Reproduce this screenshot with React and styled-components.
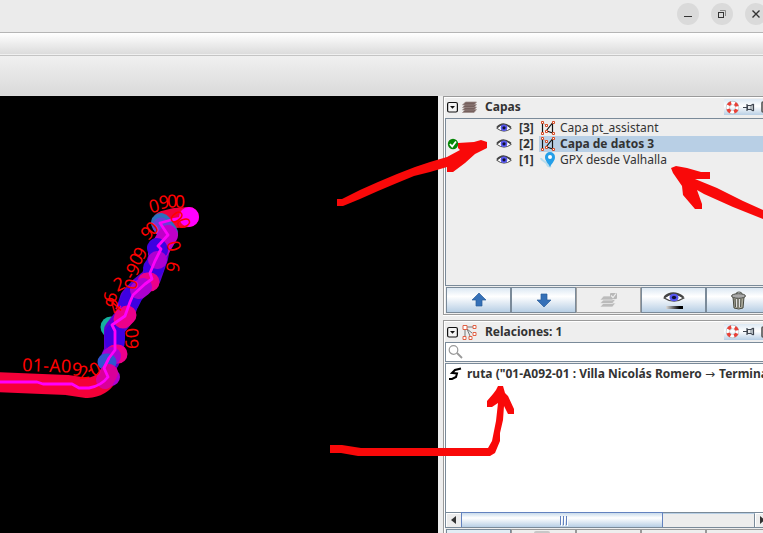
import React from 'react';
import styled, { createGlobalStyle } from 'styled-components';

const GlobalStyle = createGlobalStyle`
  * { box-sizing: border-box; }
  body { margin: 0; overflow: hidden; background: #eee; }
  svg { display: block; flex: none; }
`;
const Window = styled.div`
  position: relative; width: 763px; height: 533px; overflow: hidden;
  display: flex; flex-direction: column; background: #eee; color: #333;
  font: 12px/16px "Noto Sans", sans-serif;
`;
const TitleBar = styled.header`
  height: 33px; flex: none; display: flex; gap: 12px; padding: 3px 0 0 677px;
  background: #ebebeb; border-bottom: 1px solid #b5b5b5;
`;
const WindowButton = styled.button`
  width: 22px; height: 22px; flex: none; padding: 0; border: 0; border-radius: 50%;
  background: #dadada;
`;
const MenuBar = styled.div`
  height: 23px; flex: none; background: linear-gradient(#fff, #dadada);
  border-bottom: 1px solid #c4c4c4; box-shadow: inset 0 -1px #f0f0f0;
`;
const ToolBar = styled.div`
  height: 40px; flex: none; background: linear-gradient(#f0f0f0, #dadada);
  border-bottom: 1px solid #ddd;
`;
const Workspace = styled.main`display: flex; height: 437px; flex: none;`;
const MapView = styled.section`width: 438px; height: 437px; flex: none; background: #000;`;
const SideBar = styled.aside`
  width: 325px; height: 437px; flex: none; padding-left: 5px; background: #eee; overflow: hidden;
`;
const Panel = styled.section`
  height: ${p => p.$height}px; width: 330px;
  border: solid #9a9a9a; border-width: 1px 0 0 1px;
  box-shadow: inset 1px 1px #fff; padding-left: 1px;
`;
const Divider = styled.div`height: 6px; border-top: 1px solid #999; background: #eee; box-shadow: inset 0 1px #fff;`;
const PanelHeader = styled.div`
  height: 21px; display: flex; align-items: center; padding: 0 0 ${p => p.$raise ? 1 : 0}px 2px;
`;
const PanelTitle = styled.h2`margin: 0; width: ${p => p.$width}px; padding-left: ${p => p.$indent}px; font: bold 12px/16px "Noto Sans", sans-serif;`;
const HeaderTools = styled.div`
  display: flex; align-items: center; width: 48px; height: 16px; gap: 3px; padding-left: 1px;
  background: linear-gradient(#dce8f3, #fff 45%, #b8cfe5);
`;
const List = styled.div`
  height: ${p => p.$height}px; background: ${p => p.$bg};
  border: solid #7a8a99; border-width: 1px 0 1px 1px; padding-top: 1px;
`;
const LayerRow = styled.div`height: 16px; display: flex; align-items: center;`;
const Status = styled.span`width: 50px; padding-left: 1px; flex: none;`;
const LayerIndex = styled.b`width: 28px; padding-left: 7px; flex: none;`;
const LayerName = styled.div`
  display: flex; align-items: center; flex: 1; height: 16px; margin-left: -1px; padding-left: 1px; gap: 4px;
  white-space: nowrap; font-weight: ${p => p.$active ? 700 : 400};
  background: ${p => p.$active ? '#b8cfe5' : 'transparent'};
`;
const Buttons = styled.div`display: flex; height: 28px; padding: 1px 0 0 1px;`;
const ActionButton = styled.button`
  width: 65px; height: 26px; flex: none; padding: 0; display: flex; align-items: center; justify-content: center;
  border: 1px solid ${p => p.$off ? '#a0a0a0' : '#7a8a99'};
  background: ${p => p.$off ? '#eee' : 'linear-gradient(#dce8f3, #fff 35%, #b8cfe5)'};
`;
const SearchField = styled.div`
  height: 20px; border: 1px solid #7a8a99; border-right: 0; background: #fff; padding: 1px 2px;
  margin-bottom: 1px;
`;
const RelationList = styled.div`
  height: 165px; background: #fff; border: solid #7a8a99; border-width: 1px 0 0 1px;
  display: flex; flex-direction: column; justify-content: space-between; padding-top: 1px;
`;
const RelationRow = styled.div`height: 17px; display: flex; align-items: center; gap: 5px; padding-left: 2px; font-weight: bold; white-space: pre;`;
const Towards = styled.span`
  display: inline-block; width: 11px; height: 12px; font: 12px/12px "DejaVu Sans", sans-serif;
`;
const ScrollBar = styled.div`height: 16px; display: flex; border: solid #7a8a99; border-width: 1px 0; background: #ededed;`;
const ScrollArrow = styled.div`width: 15px; flex: none; display: flex; align-items: center; justify-content: center; box-shadow: inset 1px 1px #fff;`;
const Thumb = styled.div`
  width: 202px; flex: none; border: solid #6382bf; border-width: 1px 1px 0;
  margin-top: -1px; display: flex; gap: 1px; padding: 3px 0 2px 98px;
  background: linear-gradient(#c8daeb, #fff 35%, #b8cfe5);
`;
const Grip = styled.i`width: 1px; margin-right: 1px; height: 9px; background: #6382bf; box-shadow: 1px 1px #fff;`;
const Track = styled.div`width: 92px; flex: none; border-top: 1px solid #b8cfe5; border-right: 1px solid #7a8a99;`;
const LowerButtons = styled.div`display: flex; height: 5px; padding: 1px 0 0 1px; overflow: hidden;`;
const LowerButton = styled.div`
  width: 65px; height: 8px; flex: none; border: 1px solid ${p => p.$off ? '#999' : '#7a8a99'};
  background: ${p => p.$off ? '#eee' : '#e2edf5'}; padding-left: 22px;
  &::after { content: ''; display: ${p => p.$mark ? 'block' : 'none'}; width: 16px; height: 5px; margin-top: 1px; border-radius: 2px; background: #c7c7c7; }
`;
const Annotation = styled.svg`position: absolute; inset: 0; pointer-events: none;`;

const Eye = ({ large }) => (
  <svg width={large ? 22 : 16} height={large ? 20 : 12} viewBox={large ? '0 0 22 20' : '0 0 16 12'}>
    <g transform={large ? 'translate(.2 1) scale(1.35 1.12)' : ''}>
      <path d="M.7 6.2Q8-1 15.3 6.3 8 12 .7 6.2Z" fill="#fff" stroke="#4a4a4a" />
      <path d="M1 5.5Q7-1.3 14.8 5.5" fill="none" stroke="#444" strokeWidth="1.8" />
      <circle cx="8" cy="5.8" r="3.3" fill="#5656ef" /><circle cx="8" cy="5.8" r="1.6" fill="#111130" />
    </g>
    {large && <><defs><linearGradient id="fade"><stop stopColor="#ddd" /><stop offset=".8" /></linearGradient></defs><path fill="url(#fade)" d="M3 16h17v3H3z" /></>}
  </svg>
);
const Nodes = () => <svg width="16" height="16" viewBox="0 0 16 16"><path d="M2.5 3v9M6.5 10.5 12.5 3v9.5M7 11l5.5 2" stroke="#151515" fill="none" strokeWidth="1.2" /><path d="M3 3l3.5 2.5" stroke="#aaa" /><g fill="#fff" stroke="#d74b25"><path d="M1.5 1.5h2v2h-2zM5.5 4.5h2v2h-2zM12.5 1.5h2v2h-2zM1.5 12.5h2v2h-2zM5.5 10.5h2v2h-2zM12.5 12.5h2v2h-2z" /></g></svg>;
const Pin = () => <svg width="16" height="16" viewBox="0 0 16 16"><path d="M1 6c0 3 5 3 6 6 .5 2 2 3 4 2" fill="none" stroke="#b7dced" strokeWidth="2" /><path d="M10 15C8 11 5 9 5 5a5 5 0 0 1 10 0c0 4-3 6-5 10Z" fill="#259fe8" /><circle cx="10" cy="5" r="2" fill="#fff" /></svg>;
const Layers = () => <svg width="18" height="15" viewBox="0 0 18 15">
  {[9.5, 7, 4.5, 2].map(y => <path key={y} d={`M4.5 ${y}h11l-2.5 3H1.5z`} fill="#75605d" stroke="#9b8a86" strokeWidth=".7" />)}
</svg>;
const CheckedLayers = () => <svg width="19" height="17" viewBox="0 0 19 17">
  {[11, 7.5, 4].map(y => <path key={y} d={`M4.5 ${y}h12l-3 4H1z`} fill="#bbb" stroke="#eee" strokeWidth=".7" />)}
  <path d="M12 1h5q1 0 1 1v4q0 1-1 1h-5q-1 0-1-1V2q0-1 1-1" fill="#b8b8b8" /><path d="m12 3.5 2 2 3-4" fill="none" stroke="#eee" strokeWidth="1.2" />
</svg>;
const Relations = () => <svg width="15" height="16" viewBox="0 0 15 16"><path d="M3 5v7M5 3h6M5 5l5 4M5 5l3 7" stroke="#777" fill="none" /><g fill="#fff" stroke="#e06145"><path d="M1 1.5h4v4H1zM11 1.5h3v3h-3zM11 8.5h3v3h-3zM1 12.5h3v3H1zM7 12.5h3v3H7z" /></g></svg>;
const Dropdown = () => <svg width="11" height="12" viewBox="0 0 11 12"><rect x=".6" y="1.5" width="9.8" height="9.5" rx="1.5" fill="#f3f3f3" stroke="#111" strokeWidth="1.2" /><path d="M3 5h5L5.5 7.8Z" fill="#111" /></svg>;
const LifeRing = () => <svg width="15" height="15" viewBox="0 0 15 15"><circle cx="7.5" cy="7.5" r="4.6" fill="none" stroke="#b3bdc5" strokeWidth="4.2" /><circle cx="7.5" cy="7.5" r="4.6" fill="none" stroke="#fff" strokeWidth="3" /><circle cx="7.5" cy="7.5" r="4.7" fill="none" stroke="#e94037" strokeWidth="3.4" strokeDasharray="3.6 3.78" strokeDashoffset="-1.9" transform="rotate(0 7.5 7.5)" /></svg>;
const Pushpin = () => <svg width="12" height="11" viewBox="0 0 12 11"><path d="M0 5.5h4M4 2v7M10.5 2v7M4.5 3.5h3v4h-3zM7 4l3.5-2M7 7l3.5 2" fill="none" stroke="#3f4650" strokeWidth="1.2" /><path d="M7 4h3v3H7z" fill="#b1b8bd" /></svg>;
const Trash = () => <svg width="17" height="19" viewBox="0 0 17 19"><path d="m3 6 1 11q5 2 9 0l1-11" fill="#aaa99a" stroke="#474940" /><ellipse cx="8.5" cy="5" rx="7" ry="2.3" fill="#aaa" stroke="#484b45" /><path d="M6 3q0-2 3-2t3 2M5 8l.5 8M8 8v9M11 8l-.5 8" stroke="#50534c" fill="none" /><path d="M6.5 8v8M9.5 8v8" stroke="#ddd" /></svg>;
const Arrow = ({ down }) => <svg width="16" height="16" viewBox="0 0 16 16"><path transform={down ? 'rotate(180 8 8)' : ''} d="M8 1 15 8h-4v6H5V8H1Z" fill="#3570b7" stroke="#285c99" strokeWidth=".7" /></svg>;
const Tools = () => <HeaderTools><LifeRing /><Pushpin /><svg width="12" height="12" viewBox="0 0 12 12"><rect x="4" y="1" width="10" height="10" rx="1" fill="#eee" stroke="#555" strokeWidth="1.6" /><path d="M6 6h6" stroke="#555" strokeWidth="2" /></svg></HeaderTools>;

/* Street labels: glyph, centre x, centre y, rotation */
const labels = [
  ['0',154,206,-15],['9',164,202,-10],['0',172,201,-3],['0',180,201,0],
  ['0',177,217,50],['0',184,223,70],['0',152,228,-45],['9',147,233,-42],
  ['0',174,246,75],['6',173,267,100],['9',140,253,-60],['0',136,259,-60],['9',133,269,-60],['-',129,275,-60],
  ['2',119,284,-25],['0',131,284,-75],['6',110,297,-75],['9',112,303,-60],['4',115,308,-50],['0',132,333,85],['9',132,344,88],
  ['9',77,369,4],['2',84,372,-8],['-',89,369,-40],['0',95,369,-25]
];
function Route() {
  return <svg width="438" height="437" viewBox="0 96 438 437">
    <g fill="none" strokeLinecap="round" strokeLinejoin="round">
      <path d="M-5 382L42 384 67 385 87 388Q101 387 107 377" stroke="#f40038" strokeWidth="20" />
      <path d="M163 221 175 218 189 217" stroke="#f0003b" strokeWidth="20" />
      <circle cx="111" cy="327" r="10.5" fill="#15af9d" />
      <path d="M109 362 114 351 114 330 124 317 130 298 140 287 151 278 158 258 160 248" stroke="#5b00d3" strokeWidth="20" />
      <path d="M161 223 168 233" stroke="#2b70bd" strokeWidth="20" />
      <path d="M161 226 168 233" stroke="#6840d5" strokeWidth="17" />
      <path d="M168 235 158 252" stroke="#be00c7" strokeWidth="20" />
      <path d="M157 248l1 2M153 268h1M132 297l-3 6M115 333v9" stroke="#3e00e1" strokeWidth="20" />
      <path d="M150 282h-3M127 315l-4 4M118 354h-3" stroke="#ec008a" strokeWidth="19" />
      <path d="M157 260h1M143 287l-4 3M111 377h-1M112 356h-1" stroke="#ad00d0" strokeWidth="18" />
      <path d="M108 362h-2" stroke="#3155cf" strokeWidth="17" />
      <path d="M109 373l-4 7" stroke="#d90099" strokeWidth="18" />
      <circle cx="189" cy="217" r="10" fill="#f0f" />
      <path d="M-5 382H37L43 384H72L79 388H89Q101 386 108 377L104 368 109 358 115 350V331L112 325 125 316 130 302 133 295 145 284 152 279 150 273 155 261 161 249 158 246 168 235 160 223 171 220 189 217" stroke="#ff00fc" strokeWidth="2.8" />
    </g>
    <g fill="#f00" fontFamily="Noto Sans" fontSize="18" textAnchor="middle">
      {labels.map(([c,x,y,a], i) => <text key={i} y="6.5" transform={`translate(${x} ${y}) rotate(${a})`}>{c}</text>)}
      <text x="22" y="371" textAnchor="start" textLength="49" transform="rotate(2 22 371)">01-A0</text>
    </g>
  </svg>;
}
const layers = [{ n: 3, name: 'Capa pt_assistant' }, { n: 2, name: 'Capa de datos 3', active: true }, { n: 1, name: 'GPX desde Valhalla', gpx: true }];

export default function App() {
  return <Window><GlobalStyle />
    <TitleBar>
      <WindowButton aria-label="Minimizar"><svg width="22" height="22"><path d="M7 13.5h8" stroke="#333" /></svg></WindowButton>
      <WindowButton aria-label="Restaurar"><svg width="22" height="22" fill="none"><path d="M9 7.5h5.5V13" stroke="#888" /><rect x="7.5" y="9.5" width="5" height="5" stroke="#333" /></svg></WindowButton>
      <WindowButton aria-label="Cerrar"><svg width="22" height="22"><path d="m7.5 7.5 7 7m0-7-7 7" stroke="#333" strokeWidth="1.4" /></svg></WindowButton>
    </TitleBar>
    <MenuBar /><ToolBar />
    <Workspace>
      <MapView><Route /></MapView>
      <SideBar>
        <Panel $height={218}>
          <PanelHeader $raise><Dropdown /><svg width="3" height="1" /><Layers /><PanelTitle $indent={6} $width={245}>Capas</PanelTitle><Tools /></PanelHeader>
          <List $height={168} $bg="#eee">
            {layers.map(({ n, name, active, gpx }) => <LayerRow key={n}>
              <Status>{active && <svg width="12" height="12"><circle cx="6" cy="6" r="5.2" fill="#078507" /><path d="m3 6 2.2 2.5L9 3.5" fill="none" stroke="#fff" strokeWidth="1.8" /></svg>}</Status>
              <Eye /><LayerIndex>[{n}]</LayerIndex><LayerName $active={active}>{gpx ? <Pin /> : <Nodes />}{name}</LayerName>
            </LayerRow>)}
          </List>
          <Buttons><ActionButton><Arrow /></ActionButton><ActionButton><Arrow down /></ActionButton><ActionButton $off><CheckedLayers /></ActionButton><ActionButton><Eye large /></ActionButton><ActionButton><Trash /></ActionButton></Buttons>
        </Panel>
        <Divider />
        <Panel $height={220}>
          <PanelHeader><Dropdown /><svg width="4" height="1" /><Relations /><PanelTitle $indent={8} $width={247}>Relaciones: 1</PanelTitle><Tools /></PanelHeader>
          <SearchField><svg width="16" height="16"><circle cx="5.5" cy="6" r="4.3" fill="#fff" stroke="#999" strokeWidth="1.2" /><path d="m9 9 5 5" stroke="#999" strokeWidth="1.8" /></svg></SearchField>
          <RelationList>
            <RelationRow><svg width="14" height="15"><path d="M13 2.5 7 4 4 7l5 .5L8 11l-4 2H1" fill="none" stroke="#000" strokeWidth="2" /></svg><span>ruta ("01-A092-01 : Villa Nicolás Romero <Towards>→</Towards> Terminal</span></RelationRow>
            <ScrollBar><ScrollArrow><svg width="5" height="8"><path d="M5 0v8L0 4Z" fill="#333" /></svg></ScrollArrow><Thumb><Grip /><Grip /><Grip /></Thumb><Track /><ScrollArrow><svg width="5" height="8"><path d="M0 0v8l5-4Z" fill="#333" /></svg></ScrollArrow></ScrollBar>
          </RelationList>
          <LowerButtons><LowerButton /><LowerButton $off $mark /><LowerButton $off /><LowerButton $off /><LowerButton $off /></LowerButtons>
        </Panel>
      </SideBar>
    </Workspace>
    <Annotation width="763" height="533" fill="#f90909">
      <path d="M337 199H342L360 190 378 182 397 174 415 167 430 162 447 157 460 150 458 148V143L474 142 481 140 487 142V148L475 154 465 163 453 172H447V167L430 172 414 176 397 183 378 191 360 199 343 206H337Z" />
      <path d="M671 168 676 166 687 168 701 172H710V179L695 179 717 188 743 201 763 210V219L733 207 704 194 697 190 702 204V209H695L683 195 682 186 673 173Z" />
      <path d="M330 445H342L361 448H488L492 441 494 431 496 421 498 403 492 407H487V401L493 394 496 390 498 386H503L505 393 508 396 514 409V414H508L504 406 503 420 500 433V441L495 453 490 456H358L341 453H330Z" />
    </Annotation>
  </Window>;
}
